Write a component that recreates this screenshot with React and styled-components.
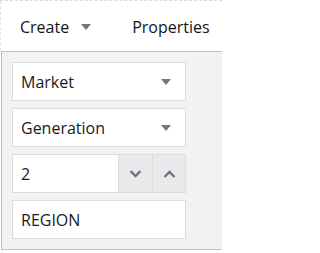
import React from "react";
import styled, { createGlobalStyle } from "styled-components";

const Global = createGlobalStyle`
  html, body { margin: 0; padding: 0; background: #ffffff; }
  body { font-family: "Segoe UI", "Open Sans", "Noto Sans", sans-serif; color: #1f1f1f; }
`;

const Page = styled.div`
  width: 222px;
  height: 253px;
  overflow: hidden;
  background: #ffffff;
  border-top: 1px dashed #d6dde8;
  box-sizing: border-box;
`;

const Header = styled.div`
  height: 50px;
  display: flex;
  align-items: center;
  padding: 2px 0 0 19px;
  box-sizing: border-box;
  border-left: 1px dashed #dfe4ec;
`;

const Tab = styled.div`
  display: flex;
  align-items: center;
  font-size: 16px;
  color: #151515;
  margin-right: ${(p) => p.$gap || 0}px;
`;

const Caret = styled.span`
  display: inline-block;
  width: 0;
  height: 0;
  border-left: ${(p) => p.$w / 2}px solid transparent;
  border-right: ${(p) => p.$w / 2}px solid transparent;
  border-top: ${(p) => p.$h}px solid #777777;
  margin-left: ${(p) => p.$ml || 0}px;
`;

const Panel = styled.div`
  margin-left: 1px;
  width: 240px;
  height: 199px;
  box-sizing: border-box;
  border: 1px solid #a9c3ef;
  border-right: none;
  background: #f2f2f4;
  padding: 10px 0 0 10px;
  display: flex;
  flex-direction: column;
  gap: 7px;
`;

const Field = styled.div`
  width: 174px;
  height: 39px;
  box-sizing: border-box;
  background: #ffffff;
  border: 1px solid #dcdcdc;
  display: flex;
  align-items: center;
  justify-content: space-between;
  padding: 1px 14px 0 8px;
  font-size: 16px;
  color: #1a1a1a;
`;

const NumberRow = styled.div`
  width: 174px;
  height: 39px;
  display: flex;
`;

const NumberInput = styled.div`
  width: 107px;
  box-sizing: border-box;
  background: #ffffff;
  border: 1px solid #dcdcdc;
  display: flex;
  align-items: center;
  padding: 1px 0 0 8px;
  font-size: 16px;
  color: #1a1a1a;
`;

const StepButton = styled.div`
  width: ${(p) => p.$w}px;
  box-sizing: border-box;
  background: #e9e9ec;
  border: 1px solid #dcdcdc;
  border-left: none;
  display: flex;
  align-items: center;
  justify-content: center;
`;

const Chevron = ({ up }) => (
  <svg width="13" height="8" viewBox="0 0 13 8">
    <path
      d={up ? "M1.5 7 L6.5 2 L11.5 7" : "M1.5 1 L6.5 6 L11.5 1"}
      fill="none"
      stroke="#71747b"
      strokeWidth="2.4"
    />
  </svg>
);

export default function App() {
  return (
    <>
      <Global />
      <Page>
        <Header>
          <Tab $gap={41}>
            Create
            <Caret $w={10} $h={6} $ml={12} />
          </Tab>
          <Tab>Properties</Tab>
        </Header>
        <Panel>
          <Field>
            Market
            <Caret $w={10} $h={6} />
          </Field>
          <Field>
            Generation
            <Caret $w={10} $h={6} />
          </Field>
          <NumberRow>
            <NumberInput>2</NumberInput>
            <StepButton $w={34}>
              <Chevron />
            </StepButton>
            <StepButton $w={33}>
              <Chevron up />
            </StepButton>
          </NumberRow>
          <Field>REGION</Field>
        </Panel>
      </Page>
    </>
  );
}
